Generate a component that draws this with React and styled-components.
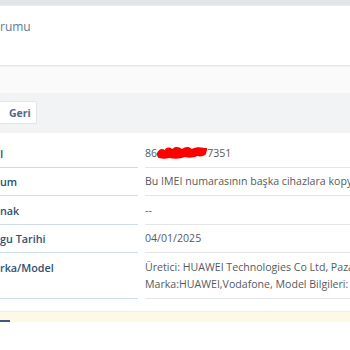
import React from "react";
import styled, { createGlobalStyle } from "styled-components";

const Global = createGlobalStyle`
  html, body { margin: 0; padding: 0; background: #ffffff; }
  body { font-family: "Open Sans", "Noto Sans", sans-serif; width: 350px; height: 350px; overflow: hidden; }
`;

const Page = styled.div`
  width: 350px;
  height: 350px;
  overflow: hidden;
  display: flex;
  flex-direction: column;
  background: #ffffff;
`;

const TopStrip = styled.div`
  height: 5px;
  background: #e2e5e8;
  border-bottom: 1px solid #e9ebee;
`;

const Header = styled.div`
  height: 60px;
  background: #ffffff;
  border-bottom: 1px solid #e6e7e9;
  display: flex;
  align-items: flex-start;
  padding-top: 13px;
  box-sizing: border-box;
  font-size: 12px;
  color: #5a7b9a;
  line-height: 16px;
`;

const SubBar = styled.div`
  height: 26px;
  background: #fafafa;
  border-top: 1px solid #f0f0f0;
`;

const Main = styled.div`
  background: #f2f3f5;
  padding: 8px 0 9px;
  display: flex;
`;

const Button = styled.button`
  font-family: "Open Sans", sans-serif;
  font-weight: 700;
  font-size: 10.5px;
  color: #4d6b88;
  background: #ffffff;
  border: 1px solid #e1e4e8;
  border-left: none;
  border-radius: 0 2px 2px 0;
  height: 23px;
  padding: 0 5px 0 9px;
  line-height: 20px;
`;

const Table = styled.div`
  background: #ffffff;
  padding-top: 6px;
  display: grid;
  grid-template-columns: 138px 1fr;
  column-gap: 7px;
`;

const Label = styled.div`
  font-size: 10.8px;
  font-weight: 600;
  color: #2f4f70;
  line-height: 17px;
  padding: 5.5px 0 5px;
  border-bottom: 1px solid #cfdbe6;
  white-space: nowrap;
`;

const Value = styled.div`
  font-size: 10.6px;
  color: #555a60;
  line-height: 17px;
  padding: 5.5px 0 5px;
  border-bottom: 1px solid #e3e5e8;
  white-space: nowrap;
  overflow: hidden;
`;

const Line = styled.div``;

const Redacted = styled.span`
  display: inline-block;
  width: 50px;
  height: 14px;
  vertical-align: -3px;
  svg { display: block; }
`;

const Notice = styled.div`
  margin-top: 12px;
  height: 10px;
  background: #fdf9e7;
  border-top: 1px solid #f7f0cd;
  display: flex;
  align-items: flex-end;
`;

const Dash = styled.div`
  width: 10px;
  height: 2px;
  background: #3d5c7c;
`;

const rows = [
  { label: "I", value: "imei" },
  { label: "um", value: "Bu IMEI numarasının başka cihazlara kopyalandığı tespit edilmiştir." },
  { label: "nak", value: "--" },
  { label: "gu Tarihi", value: "04/01/2025" },
  {
    label: "rka/Model",
    value: [
      "Üretici: HUAWEI Technologies Co Ltd, Pazar Adı: ",
      "Marka:HUAWEI,Vodafone, Model Bilgileri: ",
    ],
  },
];

const Scribble = () => (
  <svg width="50" height="14" viewBox="0 0 52 14" preserveAspectRatio="none">
    <path
      d="M0 7 C2 3 5 2 8 4 C10 1 13 1 16 3 C19 0 23 1 26 3 C29 1 33 0 36 3 C40 1 45 1 49 2 L52 2 L51 8 C49 10 46 11 42 10 C38 12 33 12 29 11 C24 13 18 13 13 12 C9 13 5 13 2 12 C0 11 0 9 0 7 Z"
      fill="#ff0000"
    />
    <path d="M3 10 C14 5 30 6 50 4" stroke="#ff0000" strokeWidth="4" strokeLinecap="round" fill="none" />
  </svg>
);

export default function App() {
  return (
    <>
      <Global />
      <Page>
        <TopStrip />
        <Header>rumu</Header>
        <SubBar />
        <Main>
          <Button>Geri</Button>
        </Main>
        <Table>
          {rows.map((r, i) => (
            <React.Fragment key={i}>
              <Label>{r.label}</Label>
              <Value>
                {r.value === "imei" ? (
                  <>
                    86
                    <Redacted>
                      <Scribble />
                    </Redacted>
                    7351
                  </>
                ) : Array.isArray(r.value) ? (
                  r.value.map((l, j) => <Line key={j}>{l}</Line>)
                ) : (
                  r.value
                )}
              </Value>
            </React.Fragment>
          ))}
        </Table>
        <Notice>
          <Dash />
        </Notice>
      </Page>
    </>
  );
}
